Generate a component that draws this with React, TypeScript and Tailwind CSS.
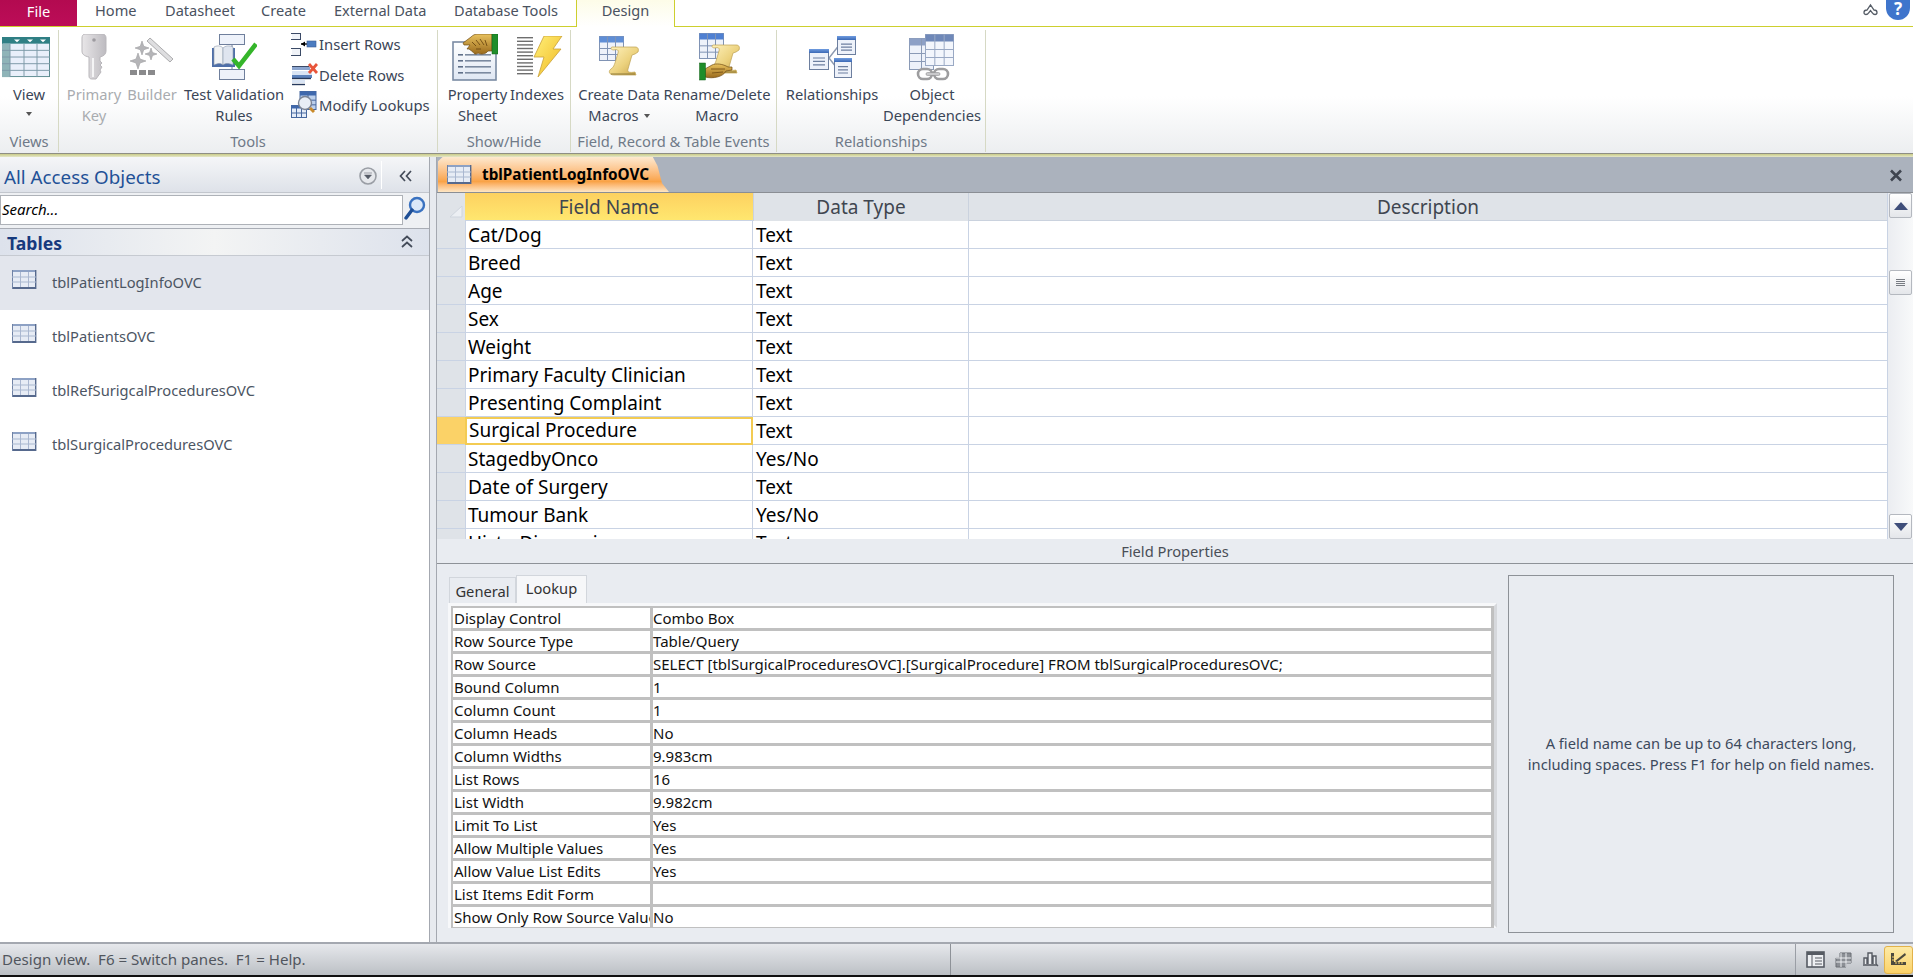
import React from "react";

const Defs = () => (
  <svg width="0" height="0" className="absolute">
    <defs>
      <linearGradient id="gold" x1="0" y1="0" x2="1" y2="1">
        <stop offset="0" stopColor="#fff3c0" />
        <stop offset="0.55" stopColor="#ecd27e" />
        <stop offset="1" stopColor="#c9a44a" />
      </linearGradient>
      <linearGradient id="hand" x1="0" y1="0" x2="0" y2="1">
        <stop offset="0" stopColor="#e9c25e" />
        <stop offset="1" stopColor="#9a6a1c" />
      </linearGradient>
      <linearGradient id="bolt" x1="0" y1="0" x2="1" y2="1">
        <stop offset="0" stopColor="#fff07a" />
        <stop offset="1" stopColor="#f0b820" />
      </linearGradient>
      <linearGradient id="blueHead" x1="0" y1="0" x2="0" y2="1">
        <stop offset="0" stopColor="#6f9ce0" />
        <stop offset="1" stopColor="#3c69b5" />
      </linearGradient>
      <linearGradient id="keyG" x1="0" y1="0" x2="1" y2="0">
        <stop offset="0" stopColor="#e8e6e8" />
        <stop offset="1" stopColor="#bdbbc0" />
      </linearGradient>
      <linearGradient id="sheet" x1="0" y1="0" x2="0" y2="1">
        <stop offset="0" stopColor="#ffffff" />
        <stop offset="1" stopColor="#dfe7f3" />
      </linearGradient>
    </defs>
  </svg>
);

const TableGrid = ({ x, y, w, h, cols, rows, head = "#5f83bd", line = "#7f93b4", fill = "#eef2fa", headH = 5 }: any) => {
  const cw = w / cols;
  const rh = (h - headH) / rows;
  return (
    <g>
      <rect x={x} y={y} width={w} height={h} fill={fill} stroke={line} />
      <rect x={x} y={y} width={w} height={headH} fill={head} />
      {Array.from({ length: cols - 1 }).map((_, i) => (
        <line key={i} x1={x + cw * (i + 1)} y1={y} x2={x + cw * (i + 1)} y2={y + h} stroke={line} />
      ))}
      {Array.from({ length: rows - 1 }).map((_, i) => (
        <line key={i} x1={x} y1={y + headH + rh * (i + 1)} x2={x + w} y2={y + headH + rh * (i + 1)} stroke={line} />
      ))}
    </g>
  );
};

const ViewIcon = () => (
  <svg width="49" height="41" viewBox="0 0 49 43" preserveAspectRatio="none">
    <rect x="0.5" y="0.5" width="47" height="41" fill="#e9effa" stroke="#5b8a8f" />
    <rect x="0" y="0" width="48" height="7" fill="#2f7f84" />
    <rect x="0" y="7" width="8" height="35" fill="#8fb4b8" />
    {[8, 22, 35].map((x) => <line key={x} x1={x} y1="7" x2={x} y2="42" stroke="#7d9aa8" />)}
    {[14, 21, 28, 35].map((y) => <line key={y} x1="0" y1={y} x2="48" y2={y} stroke="#7d9aa8" />)}
    {[15, 28, 41].map((x) => <path key={x} d={`M${x - 3} 2.5h6l-3 3z`} fill="#fff" />)}
  </svg>
);

const KeyIcon = () => (
  <svg width="26" height="47" viewBox="0 0 26 47">
    <path d="M4 0H21C24 0 25 2 25 4V17C25 20 23 22 19 23V27L21 29L19 31L21 33L19 36L20 38L15 45H11C9 45 8 44 8 42V23C3 22 1 20 1 17V4C1 2 2 0 4 0Z" fill="url(#keyG)" stroke="#b9b7bb" />
    <circle cx="13" cy="6" r="1.8" fill="#9d9ba0" />
    <rect x="11" y="24" width="2" height="19" fill="#f4f4f5" />
  </svg>
);

const Star = ({ x, y, r }: any) => (
  <path d={`M${x} ${y - r}L${x + r * 0.25} ${y - r * 0.25}L${x + r} ${y}L${x + r * 0.25} ${y + r * 0.25}L${x} ${y + r}L${x - r * 0.25} ${y + r * 0.25}L${x - r} ${y}L${x - r * 0.25} ${y - r * 0.25}Z`} fill="#b5b5b8" stroke="#a0a0a3" strokeWidth="0.6" />
);

const BuilderIcon = () => (
  <svg width="44" height="40" viewBox="0 0 44 40">
    <path d="M20 1L43 22L40 25L17 4Z" fill="#dedee0" stroke="#acacae" />
    <Star x={12} y={11} r={7} />
    <Star x={21} y={17} r={6} />
    <Star x={8} y={24} r={8} />
    <rect x="0" y="33" width="7" height="5" fill="#8a8a8c" />
    <rect x="9" y="33" width="7" height="5" fill="#8a8a8c" />
    <rect x="18" y="33" width="7" height="5" fill="#8a8a8c" />
  </svg>
);

const TestIcon = () => (
  <svg width="46" height="48" viewBox="0 0 46 48">
    <rect x="8.5" y="1.5" width="25" height="10" fill="#eef2fa" stroke="#6f7f9c" />
    <line x1="21" y1="11" x2="21" y2="37" stroke="#6f7f9c" />
    <rect x="8.5" y="36.5" width="25" height="10" fill="#eef2fa" stroke="#6f7f9c" />
    <path d="M1 15H24V34H1Z" fill="#4f6fa8" />
    <path d="M3 14C7 12 10 13 12 15V32C10 30 7 30 3 32Z" fill="#f0f2f4" stroke="#8a97ab" strokeWidth=".6" />
    <path d="M22 14C18 12 14 13 12 15V32C14 30 18 30 22 32Z" fill="#dfe5ef" stroke="#8a97ab" strokeWidth=".6" />
    <path d="M22 26L28 33L45 11" fill="none" stroke="#35b52a" strokeWidth="4.5" />
  </svg>
);

const InsertIcon = () => (
  <svg width="26" height="24" viewBox="0 0 26 24">
    <rect x="1" y="1" width="9" height="6" fill="#f0f3f8" />
    <path d="M0 1.5H10M9.5 1V7M0 7.5H10" stroke="#3b4a66" fill="none" />
    <rect x="1" y="17" width="9" height="6" fill="#f0f3f8" />
    <path d="M0 16.5H10M9.5 16V23M0 23.5H10" stroke="#3b4a66" fill="none" />
    <path d="M10 12H18" stroke="#000" strokeWidth="1.4" />
    <path d="M14 9.5L10 12L14 14.5Z" fill="#000" />
    <rect x="16" y="9" width="9" height="6" fill="#4c7cc0" stroke="#3c5d93" strokeWidth=".6" />
  </svg>
);

const DeleteIcon = () => (
  <svg width="27" height="23" viewBox="0 0 27 23">
    <rect x="1" y="4" width="18" height="3" fill="#8ba5cf" />
    <path d="M1 3.5H18" stroke="#3b4a66" />
    <rect x="1" y="8" width="20" height="4" fill="#d9e4f4" />
    <rect x="1" y="12" width="20" height="3" fill="#5d83bd" />
    <path d="M1 15.5H20" stroke="#26395c" strokeWidth="1.4" />
    <rect x="1" y="17" width="13" height="3" fill="#d9e4f4" />
    <path d="M1 21.5H14" stroke="#26395c" strokeWidth="1.4" />
    <path d="M18 1L26 10M26 1L18 10" stroke="#e8553a" strokeWidth="2.8" />
  </svg>
);

const ModifyIcon = () => (
  <svg width="26" height="28" viewBox="0 0 26 28">
    <TableGrid x={9} y={0.5} w={16} h={18} cols={2} rows={3} head="#3e68ad" headH={4} fill="#bcd0ec" line="#46689f" />
    <TableGrid x={0.5} y={14.5} w={15} h={12} cols={3} rows={2} head="#3e68ad" headH={3} fill="#e4ecf8" line="#46689f" />
    <circle cx="14" cy="12" r="6.5" fill="#e8eef6" stroke="#7b8494" strokeWidth="1.4" />
    <path d="M19 17L23 21" stroke="#c98a2a" strokeWidth="3" />
  </svg>
);

const HandShape = ({ x = 0, y = 0 }: any) => (
  <g transform={`translate(${x} ${y})`}>
    <path d="M0 9L8 3C10 1 12 0 15 0H29V17H25C23 20 18 21 15 19C13 21 11 20 10 18L6 15L4 15L7 11L1 11Z" fill="url(#hand)" stroke="#6e4a12" strokeWidth=".7" />
    <path d="M9 8L13 12M13 6L17 11M17 5L21 11M22 6L24 12M13 15L18 15" stroke="#6e4a12" strokeWidth=".9" fill="none" />
  </g>
);

const PropertyIcon = () => (
  <svg width="46" height="47" viewBox="0 0 46 47">
    <rect x="1" y="8" width="43" height="38" fill="url(#sheet)" stroke="#7a8ba3" strokeWidth="1.6" />
    {[20, 26, 32, 38].map((y) => (
      <g key={y}>
        <rect x="6" y={y} width="5" height="1.6" fill="#5f6f88" />
        <rect x="13" y={y} width="26" height="1.6" fill="#7b8aa0" />
      </g>
    ))}
    <HandShape x={11} y={0} />
    <rect x="40" y="0" width="6" height="20" fill="#1f8d2a" stroke="#126018" strokeWidth=".5" />
  </svg>
);

const IndexIcon = () => (
  <svg width="46" height="42" viewBox="0 0 46 42">
    {Array.from({ length: 11 }).map((_, i) => (
      <rect key={i} x="0" y={1 + i * 3.6} width="16" height="1.4" fill="#6e6e6e" />
    ))}
    <path d="M27 0H45L36 13H44L21 41L27 21H17Z" fill="url(#bolt)" stroke="#c9a138" strokeWidth=".8" />
  </svg>
);

const Scroll = ({ x = 0, y = 0 }: any) => (
  <g transform={`translate(${x} ${y})`}>
    <path d="M4 0H27C30 0 31 2 30 5L27 7L24 8L20 22C19 25 21 26 27 25L28 28H6C1 28 0 24 3 22C6 20 6 18 7 16L10 6C11 3 9 2 6 3C3 3 2 1 4 0Z" fill="url(#gold)" stroke="#bda050" strokeWidth=".7" />
    <path d="M3 27L27 27" stroke="#8f7a3a" strokeWidth="1" />
  </g>
);

const CreateMacroIcon = () => (
  <svg width="41" height="42" viewBox="0 0 41 42">
    <TableGrid x={0.5} y={0.5} w={24} h={24} cols={3} rows={3} head="#5f8ed6" headH={6} fill="#eef2fa" line="#8093b4" />
    <Scroll x={9} y={11} />
  </svg>
);

const RenameMacroIcon = () => (
  <svg width="41" height="48" viewBox="0 0 41 48">
    <TableGrid x={0.5} y={0.5} w={24} h={25} cols={3} rows={3} head="#4f80d2" headH={6} fill="#eef2fa" line="#8093b4" />
    <Scroll x={10} y={12} />
    <path d="M6 36L13 32C17 30 24 31 29 34H33V37L27 38C24 44 14 46 6 44Z" fill="url(#hand)" stroke="#6e4a12" strokeWidth=".7" />
    <path d="M12 36H26M13 40L24 39" stroke="#6e4a12" strokeWidth=".8" />
    <rect x="0.5" y="30" width="6" height="17" fill="#1f8d2a" stroke="#126018" strokeWidth=".5" />
  </svg>
);

const MiniTable = ({ x, y, w, h, head = 4 }: any) => (
  <g>
    <rect x={x + 0.5} y={y + 0.5} width={w} height={h} fill="#eef2fa" stroke="#6d7f9f" />
    <rect x={x} y={y} width={w + 1} height={head} fill="url(#blueHead)" />
    <path d={`M${x + 4} ${y + h * 0.45}H${x + w - 3}M${x + 4} ${y + h * 0.62}H${x + w - 3}M${x + 4} ${y + h * 0.79}H${x + w - 3}`} stroke="#6d7f9f" strokeWidth="1.2" />
  </g>
);

const RelIcon = () => (
  <svg width="47" height="43" viewBox="0 0 47 43">
    <path d="M20 22L31 8M20 22L27 31" stroke="#8d9ab1" strokeWidth="1.4" fill="none" />
    <MiniTable x={0} y={13} w={19} h={20} />
    <MiniTable x={28} y={0} w={18} h={18} />
    <MiniTable x={25} y={22} w={17} h={19} />
  </svg>
);

const ObjIcon = () => (
  <svg width="47" height="47" viewBox="0 0 47 47">
    <TableGrid x={0.5} y={4.5} w={24} h={31} cols={2} rows={3} head="#8da0c6" headH={7} fill="#eef2fa" line="#8a9ab6" />
    <TableGrid x={16.5} y={0.5} w={28} h={31} cols={3} rows={3} head="#6f88b8" headH={7} fill="#f3f6fc" line="#9aa9c4" />
    <rect x="9" y="35" width="14" height="10" rx="5" fill="none" stroke="#9d9d9f" strokeWidth="2.6" />
    <rect x="25" y="35" width="14" height="10" rx="5" fill="none" stroke="#9d9d9f" strokeWidth="2.6" />
    <rect x="17" y="38.5" width="14" height="3" rx="1.5" fill="#c9c9cb" stroke="#8d8d8f" strokeWidth=".6" />
  </svg>
);

const LargeBtn = ({ w, icon, lines, disabled, caret, iconPad = "" }: any) => (
  <div style={{ width: w }} className="flex flex-col items-center shrink-0">
    <div className={`h-[54px] w-full flex items-center justify-center ${iconPad}`}>{icon}</div>
    <div className={`text-center text-[14.7px] leading-[21px] whitespace-nowrap ${disabled ? "text-[#a9acb0]" : "text-[#3b4657]"}`}>
      {lines.map((l: string, i: number) => (
        <div key={i}>
          {l}
          {caret && i === lines.length - 1 ? <span className="inline-block align-middle ml-[5px] mb-[2px] w-0 h-0 border-x-[3.5px] border-x-transparent border-t-[4px] border-t-[#555]" /> : null}
        </div>
      ))}
    </div>
  </div>
);

const Group = ({ w, label, children }: any) => (
  <div style={{ width: w }} className="shrink-0 flex flex-col border-r border-[#d6d9c4]">
    <div className="flex-1 flex min-h-0">{children}</div>
    <div className="h-[22px] text-center text-[14.7px] leading-[22px] text-[#6f7a88] whitespace-nowrap">{label}</div>
  </div>
);

const SmallBtn = ({ icon, label }: any) => (
  <div className="h-[30.5px] flex items-center">
    <div className="w-[28px] shrink-0">{icon}</div>
    <span className="text-[14.8px] text-[#3b4657] whitespace-nowrap">{label}</span>
  </div>
);

const NavTable = () => (
  <svg width="25" height="20" viewBox="0 0 25 20">
    <rect x="0" y="0" width="24" height="19" fill="#e7ecf5" />
    <rect x="0" y="0" width="24" height="2" fill="#8da1c4" />
    <rect x="0" y="17" width="24" height="2" fill="#56698d" />
    <rect x="23" y="0" width="1.4" height="19" fill="#56698d" />
    <rect x="0" y="0" width="1" height="19" fill="#6f82a5" />
    {[8, 16].map((x) => <rect key={x} x={x} y="2" width="1" height="15" fill="#aab7d0" />)}
    {[6.5, 11.5].map((y) => <rect key={y} x="0" y={y} width="24" height="1" fill="#aab7d0" />)}
  </svg>
);

const fields: [string, string][] = [
  ["Cat/Dog", "Text"], ["Breed", "Text"], ["Age", "Text"], ["Sex", "Text"], ["Weight", "Text"],
  ["Primary Faculty Clinician", "Text"], ["Presenting Complaint", "Text"], ["Surgical Procedure", "Text"],
  ["StagedbyOnco", "Yes/No"], ["Date of Surgery", "Text"], ["Tumour Bank", "Yes/No"], ["Histo Diagnosis", "Text"],
];

const props: [string, string][] = [
  ["Display Control", "Combo Box"], ["Row Source Type", "Table/Query"],
  ["Row Source", "SELECT [tblSurgicalProceduresOVC].[SurgicalProcedure] FROM tblSurgicalProceduresOVC;"],
  ["Bound Column", "1"], ["Column Count", "1"], ["Column Heads", "No"], ["Column Widths", "9.983cm"],
  ["List Rows", "16"], ["List Width", "9.982cm"], ["Limit To List", "Yes"], ["Allow Multiple Values", "Yes"],
  ["Allow Value List Edits", "Yes"], ["List Items Edit Form", ""], ["Show Only Row Source Values", "No"],
];

const ScrollBtn = ({ children, className = "" }: any) => (
  <div className={`h-[25px] mx-[1px] rounded-[2px] border border-[#b4b8bf] bg-linear-to-b from-white to-[#e4e6ea] flex items-center justify-center ${className}`}>{children}</div>
);

export default function App() {
  return (
    <div className="w-[1913px] h-[977px] flex flex-col overflow-hidden bg-white font-['Noto_Sans',sans-serif]">
      <Defs />
      {/* Tab bar */}
      <div className="h-[27px] shrink-0 flex border-b border-[#cdcf2e] relative text-[14.6px] text-[#4a5260]">
        <div className="w-[77px] h-[26px] pb-[3px] bg-linear-to-b from-[#b30a50] to-[#bc0d58] text-white flex items-center justify-center">File</div>
        <div className="w-[18px]" />
        <div className="w-[70px] leading-[21px]">Home</div>
        <div className="w-[96px] leading-[21px]">Datasheet</div>
        <div className="w-[73px] leading-[21px]">Create</div>
        <div className="w-[120px] leading-[21px]">External Data</div>
        <div className="w-[122px] leading-[21px]">Database Tools</div>
        <div className="w-[99px] h-[27px] border-x border-[#cdcf2e] bg-linear-to-b from-[#fdfce8] to-white text-center leading-[20px] mb-[-1px] z-10">Design</div>
        <div className="flex-1" />
        <div className="flex items-start pr-[3px] gap-[8px]">
          <svg width="15" height="13" viewBox="0 0 15 13" className="mt-[3px]">
            <path d="M1 9.5C1 7.5 3 7 4 7L7.5 2L11 7C12 7 14 7.5 14 9.5C14 11 13 11.5 12 11.5C11 11.5 10 11 9.5 10L7.5 7.5L5.5 10C5 11 4 11.5 3 11.5C2 11.5 1 11 1 9.5Z" fill="#fff" stroke="#555c66" strokeWidth="1.3" />
          </svg>
          <div className="w-[24px] h-[20px] rounded-b-full bg-[#3f75cc] text-white text-[17px] font-bold leading-[18px] text-center">?</div>
        </div>
      </div>

      {/* Ribbon */}
      <div className="h-[126px] shrink-0 flex pt-[3px] pb-[1px] bg-linear-to-b from-white from-55% to-[#eceef0]">
        <Group w={59} label="Views">
          <div className="w-full flex flex-col items-center">
            <div className="h-[54px] w-full flex items-center justify-center pr-[5px]"><ViewIcon /></div>
            <div className="text-[14.7px] leading-[21px] text-[#3b4657]">View</div>
            <span className="mt-[7px] w-0 h-0 border-x-[3.5px] border-x-transparent border-t-[4px] border-t-[#555]" />
          </div>
        </Group>
        <Group w={379} label="Tools">
          <div className="w-[6px]" />
          <LargeBtn w={58} icon={<KeyIcon />} lines={["Primary", "Key"]} disabled />
          <LargeBtn w={58} icon={<BuilderIcon />} lines={["Builder"]} disabled />
          <LargeBtn w={106} icon={<TestIcon />} lines={["Test Validation", "Rules"]} />
          <div className="pl-[4px] -mt-[1px] flex flex-col">
            <SmallBtn icon={<InsertIcon />} label="Insert Rows" />
            <SmallBtn icon={<DeleteIcon />} label="Delete Rows" />
            <SmallBtn icon={<ModifyIcon />} label="Modify Lookups" />
          </div>
        </Group>
        <Group w={133} label="Show/Hide">
          <div className="w-[8px]" />
          <LargeBtn w={63} icon={<PropertyIcon />} lines={["Property", "Sheet"]} iconPad="pr-[5px]" />
          <LargeBtn w={56} icon={<IndexIcon />} lines={["Indexes"]} iconPad="pl-[5px]" />
        </Group>
        <Group w={206} label="Field, Record & Table Events">
          <div className="w-[5px]" />
          <LargeBtn w={86} icon={<CreateMacroIcon />} lines={["Create Data", "Macros"]} caret iconPad="pl-[1px]" />
          <LargeBtn w={110} icon={<RenameMacroIcon />} lines={["Rename/Delete", "Macro"]} iconPad="pl-[5px]" />
        </Group>
        <Group w={209} label="Relationships">
          <div className="w-[6px]" />
          <LargeBtn w={98} icon={<RelIcon />} lines={["Relationships"]} />
          <LargeBtn w={102} icon={<ObjIcon />} lines={["Object", "Dependencies"]} />
        </Group>
      </div>
      <div className="h-[4px] shrink-0 border-t border-[#8e8e84] bg-linear-to-b from-[#c9cb86] to-[#e4e6c8]" />

      {/* Main */}
      <div className="flex-1 min-h-0 flex">
        {/* Nav */}
        <div className="w-[429px] shrink-0 flex flex-col bg-white">
          <div className="h-[36px] shrink-0 flex items-center bg-linear-to-b from-[#f5f6f8] to-[#dee2e9] border-b border-[#c2c6cd] relative">
            <div className="pl-[4px] pt-[5px] text-[18.8px] text-[#1f5197] whitespace-nowrap flex-1">All Access Objects</div>
            <svg width="20" height="20" viewBox="0 0 20 20" className="mr-[3px] mt-[2px]">
              <circle cx="10" cy="10" r="8" fill="#e6e8ec" stroke="#9a9ea5" strokeWidth="1.6" />
              <path d="M6 7H14M6.5 9H13.5L10 13Z" fill="#555b66" stroke="#555b66" strokeWidth=".5" />
            </svg>
            <div className="w-px h-[28px] bg-white mr-[17px]" />
            <svg width="14" height="12" viewBox="0 0 14 12" className="mr-[16px] mt-[2px]">
              <path d="M6 1L1.5 6L6 11M12 1L7.5 6L12 11" fill="none" stroke="#444c5a" strokeWidth="1.7" />
            </svg>
          </div>
          <div className="h-[35px] shrink-0 flex items-start bg-[#eef0f3] pt-[2px]">
            <div className="w-[403px] h-[30px] bg-white border border-[#aeb2b8] text-[15px] italic leading-[26px] text-black pl-[1px]">Search...</div>
            <svg width="22" height="26" viewBox="0 0 22 26" className="ml-[1px] mt-[1px]">
              <circle cx="13" cy="9" r="7" fill="#dbe8f8" stroke="#3a72c0" strokeWidth="2.4" />
              <path d="M8 14L2 22" stroke="#1f4f96" strokeWidth="3.4" strokeLinecap="round" />
            </svg>
          </div>
          <div className="h-[28px] shrink-0 flex items-center bg-linear-to-r from-[#dde2ec] via-[#f3f4f4] to-[#dde2ec] border-y border-y-[#a9adb5] border-b-[#c6cad1] pl-[7px]">
            <span className="flex-1 font-bold text-[17.6px] leading-[26px] pt-[1px] text-[#173a7e]">Tables</span>
            <svg width="12" height="14" viewBox="0 0 12 14" className="mr-[16px]">
              <path d="M1 6L6 1.5L11 6M1 12L6 7.5L11 12" fill="none" stroke="#444c5a" strokeWidth="1.7" />
            </svg>
          </div>
          {["tblPatientLogInfoOVC", "tblPatientsOVC", "tblRefSurigcalProceduresOVC", "tblSurgicalProceduresOVC"].map((t, i) => (
            <div key={t} className={`h-[54px] shrink-0 flex items-start pt-[14px] pl-[12px] ${i === 0 ? "bg-[#e3e6ed]" : ""}`}>
              <NavTable />
              <span className="ml-[15px] mt-[2px] text-[14.7px] leading-[20px] text-[#4c5563] whitespace-nowrap">{t}</span>
            </div>
          ))}
        </div>

        {/* Splitter */}
        <div className="w-[8px] shrink-0 bg-[#e7eaef] border-x border-[#a4a8b0]" />

        {/* Document */}
        <div className="flex-1 min-w-0 flex flex-col">
          <div className="h-[36px] shrink-0 bg-[#abb2bd] flex items-end relative border-b border-[#8a8e94]">
            <div className="w-[231px] h-[35px] ml-[1px] [clip-path:polygon(0_12%,2%_0,93%_0,95%_25%,97%_75%,100%_100%,0_100%)] bg-linear-to-b from-[#fde9cf] via-[#f9a347] via-70% to-[#fde6c4] flex items-center">
              <div className="ml-[9px] w-[25px] shrink-0"><NavTable /></div>
              <span className="ml-[10px] text-[15.3px] font-bold text-black whitespace-nowrap">tblPatientLogInfoOVC</span>
            </div>
            <svg width="14" height="13" viewBox="0 0 14 13" className="absolute right-[10px] top-[12px]">
              <path d="M2 1.5L12 11.5M12 1.5L2 11.5" stroke="#3f4550" strokeWidth="2.6" />
            </svg>
          </div>

          <div className="h-[346px] shrink-0 flex">
            <div className="flex-1 min-w-0 overflow-hidden">
              <div className="h-[28px] flex text-[19px] text-[#3f4650]">
                <div className="w-[28px] bg-[#dfe3e8] shrink-0 relative overflow-hidden">
                  <svg width="28" height="28" viewBox="0 0 28 28"><path d="M13 24L25 13V24Z" fill="#eceff3" stroke="#cfd5dd" /></svg>
                </div>
                <div className="w-[288px] pt-[1px] bg-linear-to-b from-[#fdd160] to-[#ffe76f] flex items-center justify-center border-b border-[#c9d3e4]">Field Name</div>
                <div className="w-[216px] pt-[1px] bg-[#dfe3e8] flex items-center justify-center border-x border-[#cad2de]">Data Type</div>
                <div className="flex-1 pt-[1px] bg-[#dfe3e8] flex items-center justify-center border-b border-[#cad2de]">Description</div>
              </div>
              {fields.map(([n, d], i) => {
                const sel = i === 7;
                return (
                  <div key={n} className="h-[28px] flex text-[19px] leading-[26px] text-black">
                    <div className={`w-[28px] shrink-0 border-b border-[#c9d3e4] ${sel ? "bg-[#fbd267]" : "bg-[#dfe3e8]"}`} />
                    <div className={`w-[288px] shrink-0 pl-[2px] whitespace-nowrap ${sel ? "border-2 border-[#f3cb52] pl-[1px] leading-[23px]" : "pt-[1px] border-l border-r border-[#c9d3e4] border-b"}`}>{n}</div>
                    <div className="w-[216px] shrink-0 pt-[1px] pl-[3px] border-r border-b border-[#c9d3e4]">{d}</div>
                    <div className="flex-1 border-b border-[#c9d3e4]" />
                  </div>
                );
              })}
            </div>
            <div className="w-[26px] shrink-0 border-l border-[#c9d3e4] bg-linear-to-r from-[#ebedf1] to-[#f8f9fa] flex flex-col">
              <ScrollBtn>
                <span className="w-0 h-0 border-x-[7.5px] border-x-transparent border-b-[8px] border-b-[#3f4e7a]" />
              </ScrollBtn>
              <div className="h-[52px]" />
              <ScrollBtn>
                <svg width="9" height="8" viewBox="0 0 9 8"><path d="M0 .5H9M0 2.5H9M0 4.5H9M0 6.5H9" stroke="#777b82" /></svg>
              </ScrollBtn>
              <div className="flex-1" />
              <ScrollBtn>
                <span className="w-0 h-0 border-x-[7.5px] border-x-transparent border-t-[8px] border-t-[#3f4e7a]" />
              </ScrollBtn>
            </div>
          </div>

          <div className="h-[25px] shrink-0 bg-[#e9ecf1] border-b border-[#8e9298] text-center text-[14.7px] leading-[25px] text-[#4a4f57]">Field Properties</div>

          <div className="flex-1 min-h-0 bg-[#e9ecf1] flex pl-[11px] pr-[19px] pt-[11px]">
            <div className="w-[1049px] shrink-0 flex flex-col">
              <div className="flex items-end h-[28px] shrink-0 text-[14.7px]">
                <div className="w-[67px] h-[26px] ml-[1px] border border-b-0 border-[#d2d6dc] text-center text-[#333] leading-[26px]">General</div>
                <div className="w-[71px] h-[28px] bg-[#f6f7f9] border border-b-0 border-[#d2d6dc] text-center text-[#333] leading-[25px]">Lookup</div>
              </div>
              <div className="h-[325px] shrink-0 border-[3px] border-[#f7f8fa] border-r-[#d6d8dc]">
                <div className="bg-[#c0c0c0] p-[2px] pr-[3px] flex flex-col gap-[3px] h-[322px] overflow-hidden text-[15px] text-[#111]">
                  {props.map(([k, v]) => (
                    <div key={k} className="h-[20px] shrink-0 flex gap-[3px] leading-[20px]">
                      <div className="w-[197px] shrink-0 bg-white whitespace-nowrap overflow-hidden pl-[1px]">{k}</div>
                      <div className="flex-1 bg-white whitespace-nowrap">{v}</div>
                    </div>
                  ))}
                </div>
              </div>
            </div>
            <div className="flex-1" />
            <div className="w-[386px] h-[358px] shrink-0 border border-[#8e9298] flex items-center justify-center text-center text-[14.7px] leading-[21px] text-[#3d4a5d]">
              <div>A field name can be up to 64 characters long,<br />including spaces. Press F1 for help on field names.</div>
            </div>
          </div>
        </div>
      </div>

      {/* Status */}
      <div className="h-[35px] shrink-0 border-t-[2px] border-[#a4a8b0] border-b-[2px] border-b-[#111] bg-linear-to-b from-[#e6e8ec] to-[#bcc0c5] flex items-center text-[15.1px] text-[#51565e]">
        <div className="w-[951px] shrink-0 pl-[2px] whitespace-pre border-r border-[#8e9298] h-full leading-[30px]">Design view.  F6 = Switch panes.  F1 = Help.</div>
        <div className="flex-1" />
        <div className="w-px h-full bg-[#9a9ea5]" />
        <div className="flex items-center ml-[10px]">
          <svg width="19" height="17" viewBox="0 0 19 17" className="mr-[10px]">
            <rect x="1" y="1" width="17" height="15" fill="#eef0f3" stroke="#565b63" strokeWidth="1.6" />
            <rect x="1" y="1" width="17" height="3" fill="#565b63" />
            <path d="M6 4V16M9 7H16M9 10H16M9 13H16" stroke="#565b63" />
          </svg>
          <svg width="17" height="16" viewBox="0 0 17 16" className="mr-[10px]">
            <path d="M5 1H16V11H11V15H1V6H5Z" fill="#8b8f95" stroke="#6a6e75" />
            <path d="M1 10H16M6 1V15M11 1V15M1 6H16" stroke="#eef0f3" />
          </svg>
          <svg width="17" height="16" viewBox="0 0 17 16" className="mr-[5px]">
            <path d="M2 12V6H5V12M6 12V1H10V12M11 12V4H14V12" fill="#e9ebee" stroke="#555a62" strokeWidth="1.4" />
            <path d="M1 13H15M14 12L16 14" stroke="#555a62" strokeWidth="1.4" />
          </svg>
          <div className="w-[29px] h-[28px] rounded-[3px] border border-[#e2b24a] bg-linear-to-b from-[#fdeaa6] to-[#fbd268] flex items-center justify-center">
            <svg width="17" height="15" viewBox="0 0 17 15">
              <path d="M1 1V13H16V10H4V1Z" fill="#4d4a3f" />
              <path d="M5 9L15 1L16 3L7 10Z" fill="#4d4a3f" />
              <path d="M2 5H4M2 8H4M6 12V10M9 12V10M12 12V10" stroke="#fbd268" />
            </svg>
          </div>
        </div>
      </div>
    </div>
  );
}
